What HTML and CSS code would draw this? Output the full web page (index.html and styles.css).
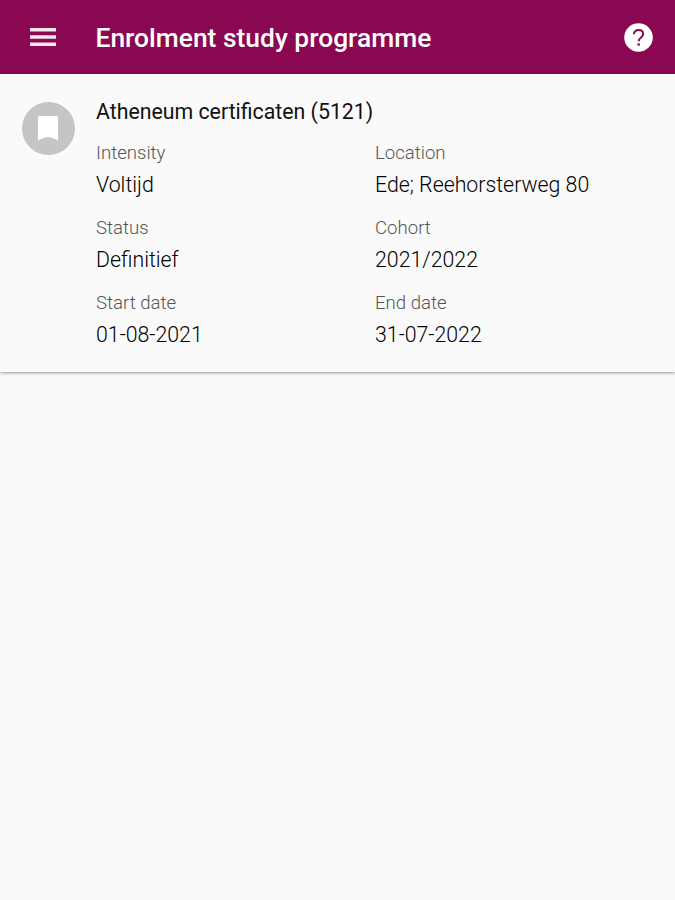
FILE: index.html
```html
<!DOCTYPE html>
<html lang="en">
<head>
<meta charset="utf-8">
<title>Enrolment study programme</title>
<link rel="stylesheet" href="styles.css">
</head>
<body>
<header class="app-bar">
  <svg class="menu-icon" viewBox="0 0 26 18" aria-hidden="true"><path d="M0 0h26v3.600H0zM0 7.200h26v3.600H0zM0 14.400h26V18H0z"/></svg>
  <h1 class="app-title">Enrolment study programme</h1>
  <svg class="help-icon" viewBox="0 0 29 29" aria-hidden="true"><circle class="disc" cx="14.500" cy="14.500" r="14.300"/><path class="hook" d="M9.900 11.300C9.900 8.900 11.800 7.100 14.500 7.100s4.600 1.700 4.600 4.100c0 3.100-4.400 3.500-4.400 7"/><path class="dot" d="M13.400 20.400h2.500v2.200h-2.500z"/></svg>
</header>
<main class="enrolment">
  <div class="avatar"><svg viewBox="0 0 20 25" aria-hidden="true"><path d="M.5 0h19a.5.5 0 0 1 .5.500V24.500Q13 21 10 21T0 24.500V.5A.5.5 0 0 1 .5 0z"/></svg></div>
  <div class="details">
    <h2 class="programme">Atheneum certificaten (5121)</h2>
    <dl class="fields">
      <div class="field"><dt>Intensity</dt><dd>Voltijd</dd></div>
      <div class="field"><dt>Location</dt><dd>Ede; Reehorsterweg 80</dd></div>
      <div class="field"><dt>Status</dt><dd>Definitief</dd></div>
      <div class="field"><dt>Cohort</dt><dd>2021/2022</dd></div>
      <div class="field"><dt>Start date</dt><dd>01-08-2021</dd></div>
      <div class="field"><dt>End date</dt><dd>31-07-2022</dd></div>
    </dl>
  </div>
</main>
</body>
</html>
```
FILE: styles.css
```css
* { box-sizing: border-box; }
body {
  margin: 0;
  min-height: 100vh;
  background: #fafafa;
  color: #111;
  font-family: Roboto, sans-serif;
}
h1, h2, dl, dd { margin: 0; }
.app-bar {
  display: flex;
  align-items: center;
  height: 74px;
  padding: 0 22px 0 30px;
  background: #8a0852;
  color: #fff;
}
.app-bar svg { display: block; fill: currentColor; }
.menu-icon { width: 26px; height: 18px; opacity: .9; }
.app-title {
  flex: 1;
  margin-left: 39.5px;
  padding-top: 2px;
  font-size: 26.4px;
  line-height: 32px;
  font-weight: 500;
}
.help-icon { width: 29px; height: 29px; }
.help-icon .hook { fill: none; stroke: #8a0852; stroke-width: 2; }
.help-icon .dot { fill: #8a0852; }
.enrolment {
  display: flex;
  gap: 21.5px;
  height: 298px;
  padding: 28px 20px 0 21.5px;
  box-shadow: 0 1px 3px rgba(0, 0, 0, .4);
}
.avatar {
  display: flex;
  align-items: center;
  justify-content: center;
  flex: none;
  width: 53px;
  height: 53px;
  border-radius: 50%;
  background: #c5c5c5;
}
.avatar svg { width: 20px; height: 25px; fill: #fff; }
.details { flex: 1; margin-top: -4px; }
.programme {
  font-size: 21.3px;
  line-height: 28px;
  font-weight: 400;
}
.fields {
  display: grid;
  grid-template-columns: 279px 1fr;
  grid-auto-rows: 75px;
  margin-top: 14px;
}
.field dt { font-size: 18.6px; line-height: 26px; font-weight: 300; color: #555; }
.field dd { font-size: 21.3px; line-height: 28px; margin-top: 5px; font-weight: 300; color: #000; }
```
